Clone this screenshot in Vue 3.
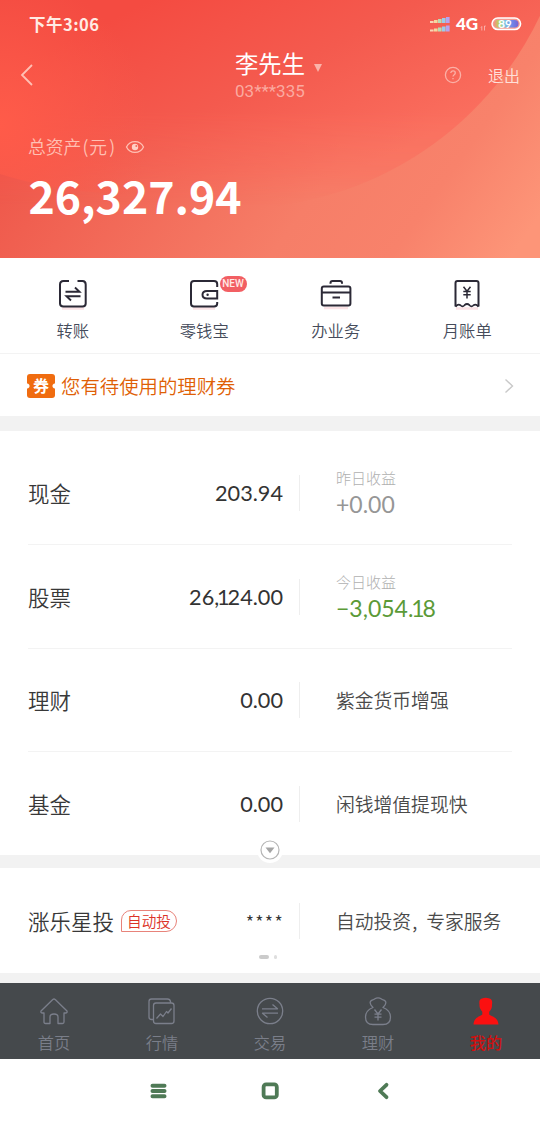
<script setup>
const rows = [
  { name: '现金', value: '203.94', label: '昨日收益', gain: '+0.00', tone: 'flat' },
  { name: '股票', value: '26,124.00', label: '今日收益', gain: '−3,054.18', tone: 'down' },
  { name: '理财', value: '0.00', note: '紫金货币增强' },
  { name: '基金', value: '0.00', note: '闲钱增值提现快' },
]
// splits an amount so that the narrow digit 1 can be set tighter
const pieces = (s) => s.split(/(1)/).filter(Boolean)
const bars = [0, 1, 2, 3, 4]
const barColors = ['#f9d3b4', '#f3d9a0', '#b9dcb4', '#9ccbe8', '#b5a4f0']
</script>

<template>
  <div class="screen">
    <header class="hero">
      <svg class="hero-bg" width="540" height="258" viewBox="0 0 540 258">
        <defs>
          <linearGradient id="base" gradientUnits="userSpaceOnUse" x1="60" y1="0" x2="480" y2="300">
            <stop offset="0" stop-color="#ee5045" />
            <stop offset="0.2" stop-color="#f05f50" />
            <stop offset="0.62" stop-color="#f67e68" />
            <stop offset="0.81" stop-color="#f8826b" />
            <stop offset="1" stop-color="#fd9578" />
          </linearGradient>
          <linearGradient id="disc" gradientUnits="userSpaceOnUse" x1="150" y1="0" x2="260" y2="220">
            <stop offset="0" stop-color="#f44b41" />
            <stop offset="0.5" stop-color="#f45a4e" />
            <stop offset="1" stop-color="#fa6e5e" />
          </linearGradient>
          <linearGradient id="fade" gradientUnits="userSpaceOnUse" x1="0" y1="110" x2="0" y2="206">
            <stop offset="0" stop-color="#fff" />
            <stop offset="0.6" stop-color="#fff" stop-opacity="0.55" />
            <stop offset="1" stop-color="#fff" stop-opacity="0" />
          </linearGradient>
          <mask id="discMask" maskUnits="userSpaceOnUse" x="0" y="0" width="540" height="258">
            <rect width="540" height="258" fill="url(#fade)" />
          </mask>
          <radialGradient id="glow" gradientUnits="userSpaceOnUse" cx="0" cy="125" r="150">
            <stop offset="0" stop-color="#ff5b49" />
            <stop offset="0.4" stop-color="#fd5b4a" stop-opacity="0.65" />
            <stop offset="1" stop-color="#fa5b4b" stop-opacity="0" />
          </radialGradient>
        </defs>
        <rect width="540" height="258" fill="url(#base)" />
        <path d="M0 0H547A336 336 0 0 1 236 208H0Z" fill="url(#disc)" mask="url(#discMask)" />
        <path d="M0 0H230V196Q80 200 0 174Z" fill="url(#glow)" />
      </svg>

      <div class="status">
        <span class="clock">下午3:06</span>
        <div class="signals">
          <svg width="20" height="16" viewBox="0 0 20 16">
            <g v-for="i in bars" :key="i" :fill="barColors[i]">
              <rect :x="i * 4" :y="5 - i" width="3.6" :height="2 + i" />
              <rect :x="i * 4" :y="13.5 - i" width="3.6" :height="2 + i" />
            </g>
          </svg>
          <span class="net">4G</span>
          <svg class="arrows" width="7" height="7" viewBox="0 0 7 7" fill="none" stroke="#fff" stroke-opacity=".6" stroke-width=".8">
            <path d="M1.800 6.500V2.500L.8 3.500M4.500 6.500V2H5.700" />
          </svg>
          <svg width="31" height="14" viewBox="0 0 31 14">
            <defs>
              <linearGradient id="cell">
                <stop offset="0" stop-color="#f58d80" />
                <stop offset="0.2" stop-color="#b9d75b" />
                <stop offset="0.4" stop-color="#7fcbe0" />
                <stop offset="0.75" stop-color="#6f86e8" />
                <stop offset="1" stop-color="#7a62d0" />
              </linearGradient>
            </defs>
            <rect x="1" y="1" width="28.600" height="11.600" rx="5.800" fill="#f79c92" stroke="#fff" stroke-width="1.500" />
            <rect x="3" y="3" width="24.500" height="7.600" rx="3.800" fill="url(#cell)" />
            <text x="14" y="11" text-anchor="middle" class="cell-text">89</text>
          </svg>
        </div>
      </div>

      <div class="title-bar">
        <svg class="back" width="14" height="22" viewBox="0 0 14 22" fill="none" stroke="#ffc0b4" stroke-width="1.800">
          <path d="M12 1L2 11L12 21" />
        </svg>
        <div class="who">
          <div class="name">李先生<i class="caret"></i></div>
          <div class="account">03***335</div>
        </div>
        <div class="tools">
          <svg width="18" height="18" viewBox="0 0 18 18" fill="none" stroke="#fbb0a6" stroke-width="1.300">
            <circle cx="9" cy="9" r="7.600" />
            <path d="M6.800 7.100C6.800 4.200 11.300 4.300 11.300 7C11.300 8.800 9 8.700 9 10.600M9 12V13.300" />
          </svg>
          <span>退出</span>
        </div>
      </div>

      <div class="total-label">
        <span>总资产<i class="paren">(</i>元<i class="paren close">)</i></span>
        <svg width="20" height="14" viewBox="0 0 20 14">
          <path d="M1.500 7C5 -.2 15 -.2 18.500 7C15 14.200 5 14.200 1.500 7Z" fill="none" stroke="#ffc0b4" stroke-width="1.300" />
          <circle cx="10" cy="7" r="3.200" fill="#ffd0c6" />
          <circle cx="11.300" cy="5.900" r="1" fill="#f46a5a" />
        </svg>
      </div>
      <div class="total">26,327.94</div>
    </header>

    <nav class="actions">
      <div class="action">
        <svg width="32" height="34" viewBox="0 0 32 34" fill="none" stroke="#2b2936" stroke-width="2">
          <path class="shade" d="M5 30.500H27" />
          <path d="M12 3H6.500Q3 3 3 6.500V25.500Q3 28.500 6.500 28.500H25.500Q28.700 28.500 28.700 25.500V6.500Q28.700 3 25.500 3H20.500" />
          <path d="M8.500 13.800H22.500L18 9.500M23.500 18.200H9.500L14 22.500" stroke-width="1.900" />
        </svg>
        <span>转账</span>
      </div>
      <div class="action">
        <svg width="32" height="34" viewBox="0 0 32 34" fill="none" stroke="#2b2936" stroke-width="2">
          <path class="shade" d="M5 30.500H27" />
          <path d="M29.200 9V6Q29.200 3 26 3H6Q3 3 3 6V25.500Q3 28.500 6 28.500H26Q29.200 28.500 29.200 25.500V24" />
          <path d="M29.200 13H19Q14.500 13 14.500 16.800Q14.500 20.500 19 20.500H29.200Z" />
          <circle cx="19.600" cy="16.800" r="1.200" fill="#2b2936" stroke="none" />
        </svg>
        <b class="new">NEW</b>
        <span>零钱宝</span>
      </div>
      <div class="action">
        <svg width="32" height="34" viewBox="0 0 32 34" fill="none" stroke="#2b2936" stroke-width="2">
          <path class="shade" d="M4 30H28" />
          <rect x="1.800" y="8.500" width="28.600" height="19" rx="2" />
          <path d="M10.500 5.800V5Q10.500 3 12.500 3H20Q22 3 22 5V5.800M2 14.600H30M12.500 19.500H20" />
        </svg>
        <span>办业务</span>
      </div>
      <div class="action">
        <svg width="32" height="34" viewBox="0 0 32 34" fill="none" stroke="#2b2936" stroke-width="2">
          <path class="shade" d="M5 30.500H27" />
          <path d="M4.500 28.500V5Q4.500 3 6.500 3H25.500Q27.500 3 27.500 5V28.500" />
          <path d="M4.500 28.600Q7 25.500 9.500 27.200Q11.500 29.500 13.500 27.200Q16 24.800 18.500 27.200Q20.500 29.500 22.500 27.200Q25 25.500 27.500 28.600" stroke-width="1.700" />
          <path d="M12.500 8.800L16 13.300L19.500 8.800M16 13.300V20.500M12.300 13.600H19.700M12.300 16.800H19.700" stroke-width="1.500" />
        </svg>
        <span>月账单</span>
      </div>
    </nav>

    <div class="coupon">
      <span class="ticket">券</span>
      <span class="coupon-text">您有待使用的理财券</span>
      <svg width="10" height="16" viewBox="0 0 10 16" fill="none" stroke="#c9c9c9" stroke-width="1.400">
        <path d="M1.500 1.500L8.500 8L1.500 14.500" />
      </svg>
    </div>

    <section class="assets">
      <div v-for="r in rows" :key="r.name" class="row">
        <span class="row-name">{{ r.name }}</span>
        <span class="row-value"><i v-for="(p, k) in pieces(r.value)" :key="k" :class="{ one: p === '1' }">{{ p }}</i></span>
        <div class="row-side">
          <template v-if="r.gain">
            <div class="gain-label">{{ r.label }}</div>
            <div class="gain" :class="r.tone"><i v-for="(p, k) in pieces(r.gain)" :key="k" :class="{ one: p === '1' }">{{ p }}</i></div>
          </template>
          <div v-else class="note">{{ r.note }}</div>
        </div>
      </div>
      <div class="expand">
        <svg width="20" height="20" viewBox="0 0 20 20">
          <circle cx="10" cy="10" r="9" fill="#fff" stroke="#b5b5b5" stroke-width="1.200" />
          <path d="M5.500 7.500H14.500L10 13.200Z" fill="#a5a5a5" />
        </svg>
      </div>
    </section>

    <section class="promo">
      <div class="row">
        <span class="row-name">涨乐星投</span>
        <span class="tag">自动投</span>
        <span class="row-value stars">****</span>
        <div class="row-side"><div class="note">自动投资<i class="comma">,</i>专家服务</div></div>
      </div>
      <div class="pager"><i class="on"></i><i></i></div>
    </section>

    <nav class="tabs">
      <div class="tab">
        <svg width="32" height="32" viewBox="0 0 32 32">
          <path d="M3 15L14.800 3.500Q16 2.500 17.200 3.500L29 15Q29.500 17 27.500 17H26V26Q26 27.500 24.500 27.500H20V21Q20 18 16 18Q12 18 12 21V27.500H7.500Q6 27.500 6 26V17H4.500Q2.500 17 3 15Z" />
        </svg>
        <span>首页</span>
      </div>
      <div class="tab">
        <svg width="32" height="32" viewBox="0 0 32 32">
          <path d="M7 23.500H5.500Q3 23.500 3 21V5.500Q3 3 5.500 3H21.500Q24 3 24.500 5.500V7" />
          <rect x="7.500" y="7" width="20.500" height="20.500" rx="2.500" />
          <path d="M10.500 22.500L14.500 18L17 20.500L20.500 15.500L22 17L25.500 12.500" />
        </svg>
        <span>行情</span>
      </div>
      <div class="tab">
        <svg width="32" height="32" viewBox="0 0 32 32">
          <circle cx="16" cy="15" r="12.700" />
          <path d="M8 12.800H23.500L18.500 8.500M24 17.200H8.500L13.500 21.500" />
        </svg>
        <span>交易</span>
      </div>
      <div class="tab">
        <svg width="32" height="32" viewBox="0 0 32 32">
          <path d="M11 11.500C8.500 9 7.500 6.500 8.800 5C10 3.500 11.300 4.200 12.500 3Q16 .8 19.500 3C20.700 4.200 22 3.500 23.200 5C24.500 6.500 23.500 9 21 11.500C26 13.500 28.500 17 28.500 21Q28.500 28.500 21 28.500H11Q3.500 28.500 3.500 21C3.500 17 6 13.500 11 11.500Z" />
          <path d="M12.500 13.500L16 18L19.500 13.500M16 18V24.500M12.500 18.200H19.500M12.500 21.200H19.500" />
        </svg>
        <span>理财</span>
      </div>
      <div class="tab active">
        <svg width="32" height="32" viewBox="0 0 32 32">
          <path d="M12 2.500Q15.500 .8 19.500 2.500C22 3 22.500 5.500 22 8.500C22.200 11.500 21 14 19.200 15.800V18.500C21 20.300 28 21 28.500 28.500H3.500C4 21 10.500 20.300 12.300 18.500V15.800C10.500 14 9.200 11.500 9.500 8.500C9 5.500 9.500 3 12 2.500Z" />
        </svg>
        <span>我的</span>
      </div>
    </nav>

    <footer class="system">
      <svg width="18" height="18" viewBox="0 0 18 18" stroke="#4f7a56" stroke-width="4" stroke-linecap="round">
        <path d="M3.500 3.700H15.500M3.500 9H15.500M3.500 14.300H15.500" />
      </svg>
      <svg width="18" height="18" viewBox="0 0 18 18" fill="none" stroke="#4f7a56" stroke-width="3.800">
        <rect x="2.600" y="2.400" width="13.200" height="13" rx="2.500" />
      </svg>
      <svg width="18" height="18" viewBox="0 0 18 18" fill="none" stroke="#4f7a56" stroke-width="3.800" stroke-linecap="round" stroke-linejoin="round">
        <path d="M13.500 2.800L7 9L13.500 15.200" />
      </svg>
    </footer>
  </div>
</template>

<style>
body { background: #fff; }
</style>

<style scoped>
.screen {
  width: 540px;
  height: 1124px;
  overflow: hidden;
  display: flex;
  flex-direction: column;
  background: #fff;
  font-family: "Noto Sans CJK SC", sans-serif;
  font-weight: 350;
  color: #383838;
  white-space: nowrap;
}
svg { display: block; flex: none; }
i { font-style: normal; }

.hero { position: relative; height: 258px; flex: none; color: #fff; }
.hero-bg { position: absolute; left: 0; top: 0; }
.status, .title-bar, .total-label, .total { position: relative; }
.status {
  height: 48px;
  box-sizing: border-box;
  padding: 0 18px 0 29px;
  display: flex;
  align-items: center;
  justify-content: space-between;
}
.clock { font: 700 16.500px/24px "Noto Sans CJK SC", sans-serif; color: #ffebe4; letter-spacing: 0.500px; }
.signals { display: flex; align-items: center; }
.net { font: 900 17px/20px Lato, sans-serif; margin-left: 6px; width: 23px; }
.arrows { margin: 7px 4px 0 1px; }
.cell-text { font: 700 11.500px Lato, sans-serif; fill: #fff; }

.title-bar { height: 54px; display: grid; grid-template-columns: 1fr auto 1fr; align-items: start; }
.back { margin: 16px 0 0 20px; }
.name { position: relative; font-size: 23.300px; font-weight: 400; line-height: 31px; height: 32px; }
.caret {
  position: absolute;
  left: 79px;
  top: 16px;
  border: 4.500px solid transparent;
  border-top: 8px solid #fbb3a8;
  border-bottom: 0;
}
.account { font: 400 17px/22px Roboto, sans-serif; color: #fbaaa0; }
.tools { display: flex; align-items: center; justify-content: flex-end; gap: 26px; padding: 14px 20px 0 0; font-size: 16px; line-height: 26px; color: #ffe0da; }

.total-label { margin: 32px 0 0 28px; height: 26px; display: flex; align-items: center; gap: 8px; font-size: 17.800px; line-height: 26px; color: #ffc0b4; }
.total-label span { width: 89px; margin-top: -2px; }
.paren { display: inline-block; width: 8px; text-align: center; }
.close { margin-left: 1px; }
.total { margin: 8px 0 0 28.500px; font: 700 44.600px/54px "Noto Sans CJK SC", sans-serif; }

.actions {
  height: 96px;
  flex: none;
  box-sizing: border-box;
  border-bottom: 1px solid #f3f3f3;
  padding: 0 7px;
  display: grid;
  grid-template-columns: repeat(4, 1fr);
}
.action { position: relative; display: flex; flex-direction: column; align-items: center; padding-top: 20px; }
.action span { font-size: 16.300px; line-height: 24px; margin-top: 6px; color: #454b5a; }
.action .shade { stroke: #fbe3e6; stroke-width: 2.500; }
.new {
  position: absolute;
  left: 81px;
  top: 18px;
  width: 27px;
  height: 16px;
  border-radius: 8px;
  background: #f25f63;
  color: #ffe9e6;
  font: 500 10px/16px Roboto, sans-serif;
  text-align: center;
}

.coupon { height: 62px; flex: none; box-sizing: border-box; display: flex; align-items: center; padding: 2px 26px 0 27px; }
.ticket {
  width: 28px;
  height: 24px;
  border-radius: 3px;
  background:
    radial-gradient(circle at 0 50%, #fff 2px, transparent 3px),
    radial-gradient(circle at 100% 50%, #fff 2px, transparent 3px),
    #f06c10;
  color: #fff;
  font-size: 16px;
  font-weight: 700;
  line-height: 23px;
  text-align: center;
}
.coupon-text { flex: 1; margin-left: 6px; font-size: 19.400px; line-height: 28px; color: #df5f06; }

.assets { position: relative; z-index: 1; border-top: 15px solid #f2f2f2; padding-top: 9.500px; height: 414.500px; flex: none; }
.row { position: relative; height: 103.500px; box-sizing: border-box; margin: 0 28px; padding-top: 1px; display: flex; align-items: center; }
.assets .row + .row { border-top: 1px solid #f3f3f3; }
.row-name { font-size: 21.500px; line-height: 32px; }
.row-value { margin-left: auto; font: 400 21.700px/28px Lato, sans-serif; color: #333; }
.one { margin: 0 -2px 0 -2.200px; }
.row-side {
  width: 213px;
  height: 36px;
  box-sizing: border-box;
  margin-left: 16px;
  padding-left: 36px;
  border-left: 1px solid #eee;
  display: flex;
  flex-direction: column;
  justify-content: center;
}
.gain-label { font-size: 15px; line-height: 22px; color: #b0b0b0; font-weight: 300; }
.gain { font: 400 23px/30px Lato, sans-serif; }
.flat { color: #969696; }
.down { color: #5b9a37; }
.note { font-size: 18.800px; line-height: 28px; color: #4a4a4a; }
.expand {
  position: absolute;
  left: 257px;
  bottom: -8px;
  width: 26px;
  height: 26px;
  border-radius: 50%;
  background: #fff;
  display: flex;
  align-items: center;
  justify-content: center;
}

.promo { position: relative; height: 104.500px; flex: none; border-top: 13px solid #f2f2f2; border-bottom: 10.500px solid #f2f2f2; }
.promo .row { height: 105.500px; }
.tag {
  margin-left: 7px;
  width: 56px;
  height: 22px;
  box-sizing: border-box;
  border: 1px solid #e8837a;
  border-radius: 10px 11px 11px 0;
  font-size: 14.600px;
  line-height: 20px;
  text-align: center;
  color: #dc3228;
}
.stars { font: 350 18px/26px "Noto Sans CJK SC", sans-serif; letter-spacing: 1.300px; margin-right: -1px; }
.comma { display: inline-block; width: 15px; padding-left: 1px; box-sizing: border-box; }
.pager { position: absolute; left: 259px; top: 86.500px; display: flex; gap: 5px; }
.pager i { width: 3px; height: 4px; border-radius: 2px; background: #dedede; }
.pager .on { width: 10px; background: #cbcbcb; }

.tabs { height: 76px; flex: none; display: grid; grid-template-columns: repeat(5, 1fr); background: #45494c; }
.tab { display: flex; flex-direction: column; align-items: center; padding-top: 13px; color: #7a7e89; }
.tab svg { fill: none; stroke: #7b7f8b; stroke-width: 1.300; stroke-linejoin: round; }
.tab span { font-size: 16.200px; line-height: 24px; margin-top: 2px; }
.active { color: #d01010; }
.active svg { fill: #fb1010; stroke: none; }
.active span { font-weight: 500; }

.system { flex: 1; display: flex; align-items: center; justify-content: center; gap: 94px; }
</style>
